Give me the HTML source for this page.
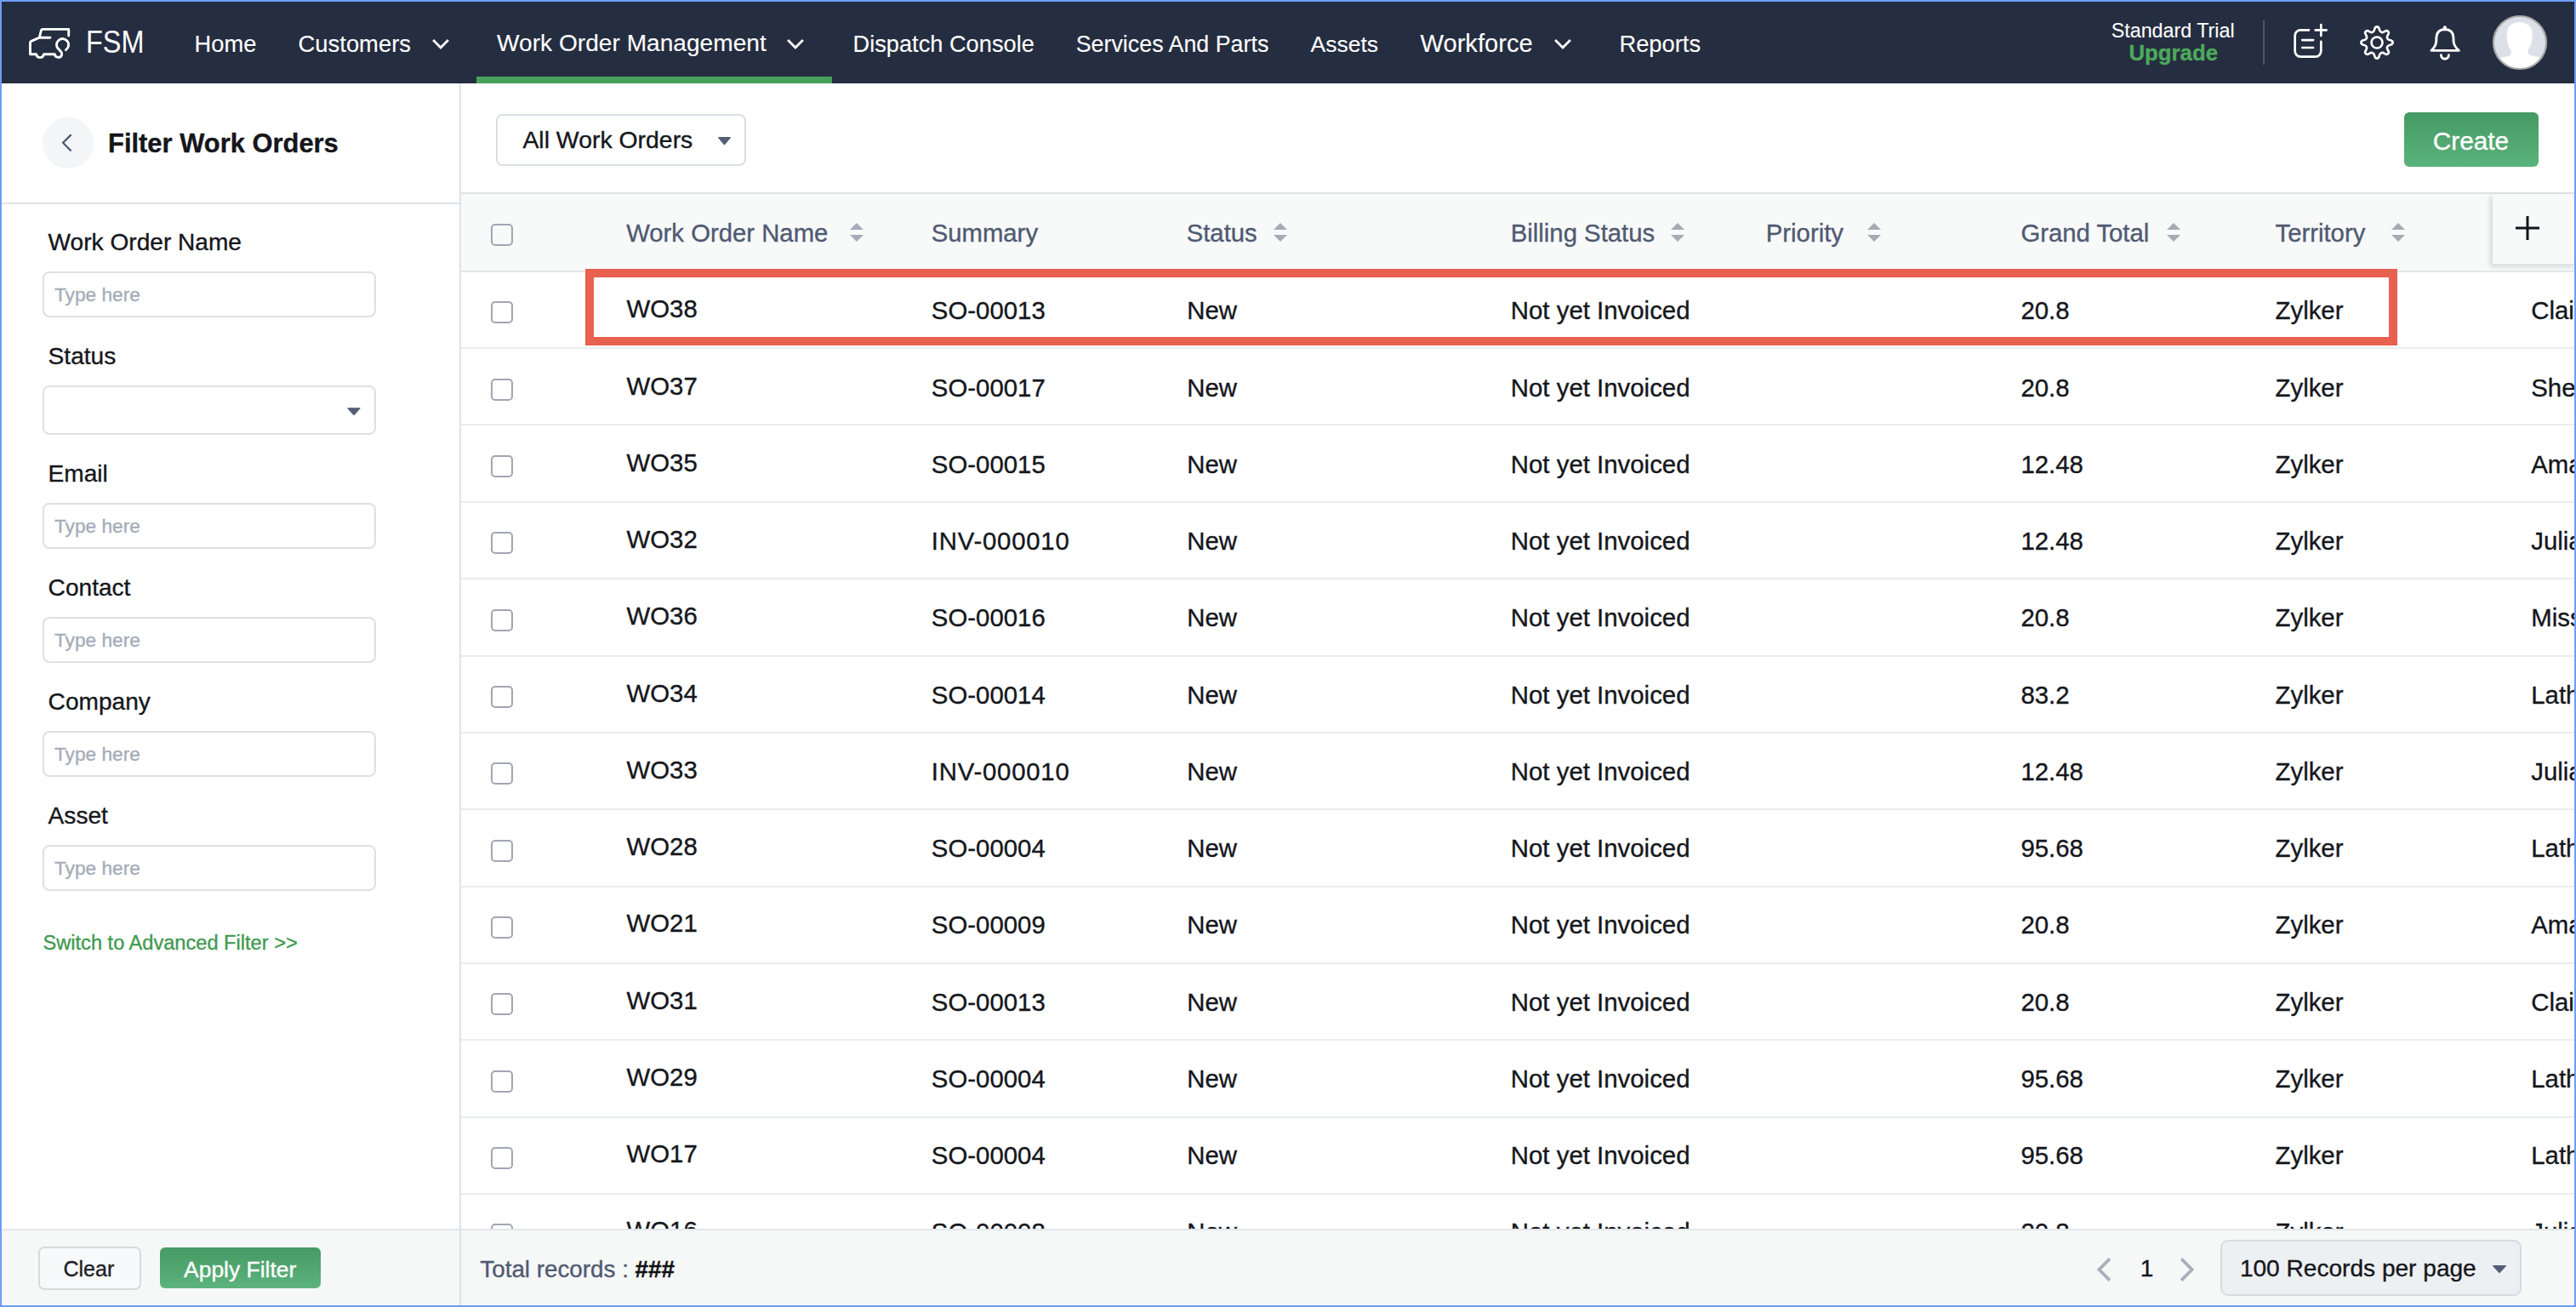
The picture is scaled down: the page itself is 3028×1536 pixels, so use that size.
<!DOCTYPE html><html><head><meta charset="utf-8"><style>
*{margin:0;padding:0;box-sizing:border-box}
html,body{width:3028px;height:1536px;overflow:hidden;background:#fff;font-family:"Liberation Sans",sans-serif}
.t{position:absolute;line-height:1;white-space:nowrap;-webkit-text-stroke:0.35px currentColor}
.a{position:absolute}
</style></head><body>
<div class="a" style="left:0;top:0;width:3028px;height:1536px;border:2px solid #6f9cf6;z-index:50;pointer-events:none"></div>
<div class="a" style="left:0;top:0;width:3028px;height:98px;background:#252d40"></div>
<div class="a" style="left:560px;top:90px;width:418px;height:8px;background:#46a05a"></div>
<svg class="a" style="left:30px;top:28px" width="60" height="48" viewBox="0 0 60 48" fill="none" stroke="#fff" stroke-width="2.9" stroke-linecap="round" stroke-linejoin="round">
<path d="M50.7,14 V6.4 H20 Q18.9,6.4 18.5,7.5 L16.3,16.2 H29 M16.3,16.2 L6.8,20.4 Q5.5,21 5.5,22.4 V35.8 H12.6 A4.5,4.5 0 0 0 21.5,35.8 H34.3 A4.3,4.3 0 0 0 42.6,36.5 Q43.2,34.5 41.8,33 L37.2,27.8 A7.1,7.1 0 1 1 47.4,30.6"/>
</svg>
<div class="t" style="left:100.5px;top:30.7px;font-size:37.0px;color:#fff;-webkit-text-stroke:0;transform:scaleX(0.8774);transform-origin:0 0;">FSM</div>
<div class="t" style="left:228.6px;top:38.1px;font-size:27.34px;color:#fff;-webkit-text-stroke:0.1px #fff;">Home</div>
<div class="t" style="left:350.6px;top:38.0px;font-size:27.38px;color:#fff;-webkit-text-stroke:0.1px #fff;">Customers</div>
<div class="t" style="left:584.0px;top:37.4px;font-size:28.14px;color:#fff;-webkit-text-stroke:0.1px #fff;">Work Order Management</div>
<div class="t" style="left:1002.5px;top:38.1px;font-size:27.23px;color:#fff;-webkit-text-stroke:0.1px #fff;">Dispatch Console</div>
<div class="t" style="left:1264.7px;top:38.5px;font-size:26.83px;color:#fff;-webkit-text-stroke:0.1px #fff;">Services And Parts</div>
<div class="t" style="left:1540.5px;top:38.8px;font-size:26.5px;color:#fff;-webkit-text-stroke:0.1px #fff;">Assets</div>
<div class="t" style="left:1669.5px;top:36.5px;font-size:29.14px;color:#fff;-webkit-text-stroke:0.1px #fff;">Workforce</div>
<div class="t" style="left:1903.5px;top:38.1px;font-size:27.29px;color:#fff;-webkit-text-stroke:0.1px #fff;">Reports</div>
<svg class="a" style="left:505.5px;top:40px" width="24" height="22" viewBox="0 0 24 22" fill="none" stroke="#fff" stroke-width="2.8" stroke-linecap="butt" stroke-linejoin="miter"><path d="M3.1,7.1 L12,16 L20.9,7.1"/></svg>
<svg class="a" style="left:923.2px;top:40px" width="24" height="22" viewBox="0 0 24 22" fill="none" stroke="#fff" stroke-width="2.8" stroke-linecap="butt" stroke-linejoin="miter"><path d="M3.1,7.1 L12,16 L20.9,7.1"/></svg>
<svg class="a" style="left:1825.1px;top:40px" width="24" height="22" viewBox="0 0 24 22" fill="none" stroke="#fff" stroke-width="2.8" stroke-linecap="butt" stroke-linejoin="miter"><path d="M3.1,7.1 L12,16 L20.9,7.1"/></svg>
<div class="t" style="left:2481.7px;top:24.9px;font-size:23.29px;color:#fff;-webkit-text-stroke:0.1px #fff;">Standard Trial</div>
<div class="t" style="left:2502.4px;top:50.2px;font-size:25.8px;color:#4caa5c;font-weight:700;">Upgrade</div>
<div class="a" style="left:2660px;top:24px;width:2px;height:52px;background:#4d5566"></div>
<svg class="a" style="left:2690px;top:22px" width="50" height="50" viewBox="0 0 50 50" fill="none" stroke="#fff" stroke-width="2.7" stroke-linecap="round">
<path d="M24,13.4 H14.2 A6.5,6.5 0 0 0 7.65,19.9 V38.1 A6.5,6.5 0 0 0 14.2,44.6 H31.8 A6.5,6.5 0 0 0 38.3,38.1 V26.9 M16.2,25.1 H29.1 M16.2,34 H29.1 M38.3,7.1 V19.9 M31.7,13.4 H44.6"/>
</svg>
<svg class="a" style="left:2768px;top:24px" width="50" height="50" viewBox="0 0 50 50" fill="none" stroke="#fff" stroke-width="2.7" stroke-linejoin="round">
<path d="M20.96,13.83 Q22.67,13.12 23.28,10.27 Q23.88,7.42 26.00,7.42 Q28.12,7.42 28.72,10.27 Q29.33,13.12 31.04,13.83 Q32.75,14.54 35.20,12.95 Q37.64,11.37 39.14,12.86 Q40.63,14.36 39.05,16.80 Q37.46,19.25 38.17,20.96 Q38.88,22.67 41.73,23.28 Q44.58,23.88 44.58,26.00 Q44.58,28.12 41.73,28.72 Q38.88,29.33 38.17,31.04 Q37.46,32.75 39.05,35.20 Q40.63,37.64 39.14,39.14 Q37.64,40.63 35.20,39.05 Q32.75,37.46 31.04,38.17 Q29.33,38.88 28.72,41.73 Q28.12,44.58 26.00,44.58 Q23.88,44.58 23.28,41.73 Q22.67,38.88 20.96,38.17 Q19.25,37.46 16.80,39.05 Q14.36,40.63 12.86,39.14 Q11.37,37.64 12.95,35.20 Q14.54,32.75 13.83,31.04 Q13.12,29.33 10.27,28.72 Q7.42,28.12 7.42,26.00 Q7.42,23.88 10.27,23.28 Q13.12,22.67 13.83,20.96 Q14.54,19.25 12.95,16.80 Q11.37,14.36 12.86,12.86 Q14.36,11.37 16.80,12.95 Q19.25,14.54 20.96,13.83Z"/><circle cx="26" cy="26" r="6.5"/>
</svg>
<svg class="a" style="left:2850px;top:24px" width="50" height="50" viewBox="0 0 50 50" fill="none" stroke="#fff" stroke-width="2.9" stroke-linecap="round" stroke-linejoin="round">
<path d="M8,35.4 Q13.3,30 13.7,25 L13.9,19.5 Q14.6,10.7 23.9,10.5 Q33.2,10.7 33.9,19.5 L34.1,25 Q34.5,30 40.3,35.4 Z"/>
<path d="M19.4,40.8 A4.5,4.5 0 0 0 28.4,40.8"/>
<circle cx="23.9" cy="8.3" r="2.1" fill="#fff" stroke="none"/>
</svg>
<svg class="a" style="left:2928px;top:16px" width="68" height="68" viewBox="0 0 68 68">
<defs><clipPath id="av"><circle cx="34" cy="34" r="31"/></clipPath></defs>
<circle cx="34" cy="34" r="31" fill="#dce0e9"/>
<g clip-path="url(#av)" fill="#fff">
<path d="M18.7,25 Q18.5,11 33.5,10.1 Q48.8,11 48.6,25 Q48.3,33 46.8,37 Q45.5,40 44,42 L43.4,44.5 L44.5,48 Q47,49.5 53,50.5 Q58,51.5 60,54 L66,70 L2,70 L8,54 Q10,52 16,51 Q21,50 23.5,48.5 L23.8,44.5 L22,41 Q20.5,38 19.5,34 Q18.8,30 18.7,25 Z"/>
</g>
<circle cx="34" cy="34" r="31" fill="none" stroke="#a9a9a9" stroke-width="2.2"/>
</svg>
<div class="a" style="left:540px;top:98px;width:2px;height:1438px;background:#dde3e8"></div>
<div class="a" style="left:2px;top:238px;width:538px;height:2px;background:#dde3e8"></div>
<div class="a" style="left:50px;top:138px;width:60px;height:60px;border-radius:50%;background:#f3f5f7"></div>
<svg class="a" style="left:66px;top:152px" width="28" height="32" viewBox="0 0 28 32" fill="none" stroke="#4d5873" stroke-width="2.3" stroke-linecap="round" stroke-linejoin="round"><path d="M17,6.9 L8,15.8 L17,24.8"/></svg>
<div class="t" style="left:127.0px;top:153.8px;font-size:30.91px;color:#14161b;font-weight:700;">Filter Work Orders</div>
<div class="t" style="left:56.6px;top:270.8px;font-size:28.1px;color:#15171c;">Work Order Name</div>
<div class="a" style="left:50px;top:319px;width:392px;height:54px;border:2px solid #dce1e5;border-radius:8px;background:#fff"></div>
<div class="t" style="left:64.0px;top:335.4px;font-size:22.7px;color:#a5acb8;">Type here</div>
<div class="t" style="left:56.6px;top:405.2px;font-size:28.1px;color:#15171c;">Status</div>
<div class="a" style="left:50px;top:453px;width:392px;height:58px;border:2px solid #dce1e5;border-radius:8px;background:#fff"></div>
<svg class="a" style="left:407px;top:478px" width="18" height="10" viewBox="0 0 18 10"><path d="M2,1.8 H16 L9,9.6Z" fill="#535e76" stroke="#535e76" stroke-width="1.2" stroke-linejoin="round"/></svg>
<div class="t" style="left:56.6px;top:542.6px;font-size:28.1px;color:#15171c;">Email</div>
<div class="a" style="left:50px;top:591px;width:392px;height:54px;border:2px solid #dce1e5;border-radius:8px;background:#fff"></div>
<div class="t" style="left:64.0px;top:607.4px;font-size:22.7px;color:#a5acb8;">Type here</div>
<div class="t" style="left:56.6px;top:677.2px;font-size:28.1px;color:#15171c;">Contact</div>
<div class="a" style="left:50px;top:725px;width:392px;height:54px;border:2px solid #dce1e5;border-radius:8px;background:#fff"></div>
<div class="t" style="left:64.0px;top:741.4px;font-size:22.7px;color:#a5acb8;">Type here</div>
<div class="t" style="left:56.6px;top:811.4px;font-size:28.1px;color:#15171c;">Company</div>
<div class="a" style="left:50px;top:859px;width:392px;height:54px;border:2px solid #dce1e5;border-radius:8px;background:#fff"></div>
<div class="t" style="left:64.0px;top:875.4px;font-size:22.7px;color:#a5acb8;">Type here</div>
<div class="t" style="left:56.6px;top:945.2px;font-size:28.1px;color:#15171c;">Asset</div>
<div class="a" style="left:50px;top:993px;width:392px;height:54px;border:2px solid #dce1e5;border-radius:8px;background:#fff"></div>
<div class="t" style="left:64.0px;top:1009.4px;font-size:22.7px;color:#a5acb8;">Type here</div>
<div class="t" style="left:50.5px;top:1097.3px;font-size:23.61px;color:#3f9a50;">Switch to Advanced Filter &gt;&gt;</div>
<div class="a" style="left:583px;top:134px;width:294px;height:61px;border:2px solid #d9dfe4;border-radius:8px;background:#fff"></div>
<div class="t" style="left:614.4px;top:150.3px;font-size:28.41px;color:#15171c;">All Work Orders</div>
<svg class="a" style="left:843px;top:160px" width="18" height="12" viewBox="0 0 18 12"><path d="M1.6,1.6 H15.4 L8.5,9.8Z" fill="#535e76" stroke="#535e76" stroke-width="1.2" stroke-linejoin="round"/></svg>
<div class="a" style="left:2826px;top:132px;width:158px;height:64px;border-radius:6px;background:linear-gradient(#469a63,#5ab37c)"></div>
<div class="t" style="left:2859.8px;top:150.7px;font-size:29.73px;color:#fff;">Create</div>
<div class="a" style="left:542px;top:226px;width:2486px;height:94px;background:#f8f9f9;border-top:2px solid #dde3e8;border-bottom:2px solid #e3e8ec"></div>
<div class="a" style="left:577px;top:263px;width:26px;height:26px;border:2px solid #a1a6b4;border-radius:5px"></div>
<div class="t" style="left:736.2px;top:258.7px;font-size:29.3px;color:#4f5a72;">Work Order Name</div>
<svg class="a" style="left:999.0px;top:262px" width="16" height="22" viewBox="0 0 16 22" fill="#a6abb8"><path d="M0,8 L8,0 L16,8Z M0,14 L8,22 L16,14Z"/></svg>
<div class="t" style="left:1094.7px;top:258.7px;font-size:29.3px;color:#4f5a72;">Summary</div>
<div class="t" style="left:1394.7px;top:258.7px;font-size:29.3px;color:#4f5a72;">Status</div>
<svg class="a" style="left:1497.0px;top:262px" width="16" height="22" viewBox="0 0 16 22" fill="#a6abb8"><path d="M0,8 L8,0 L16,8Z M0,14 L8,22 L16,14Z"/></svg>
<div class="t" style="left:1775.8px;top:258.7px;font-size:29.3px;color:#4f5a72;">Billing Status</div>
<svg class="a" style="left:1964.0px;top:262px" width="16" height="22" viewBox="0 0 16 22" fill="#a6abb8"><path d="M0,8 L8,0 L16,8Z M0,14 L8,22 L16,14Z"/></svg>
<div class="t" style="left:2075.8px;top:258.7px;font-size:29.3px;color:#4f5a72;">Priority</div>
<svg class="a" style="left:2195.4px;top:262px" width="16" height="22" viewBox="0 0 16 22" fill="#a6abb8"><path d="M0,8 L8,0 L16,8Z M0,14 L8,22 L16,14Z"/></svg>
<div class="t" style="left:2375.4px;top:258.7px;font-size:29.3px;color:#4f5a72;">Grand Total</div>
<svg class="a" style="left:2547.3px;top:262px" width="16" height="22" viewBox="0 0 16 22" fill="#a6abb8"><path d="M0,8 L8,0 L16,8Z M0,14 L8,22 L16,14Z"/></svg>
<div class="t" style="left:2674.5px;top:258.7px;font-size:29.3px;color:#4f5a72;">Territory</div>
<svg class="a" style="left:2811.0px;top:262px" width="16" height="22" viewBox="0 0 16 22" fill="#a6abb8"><path d="M0,8 L8,0 L16,8Z M0,14 L8,22 L16,14Z"/></svg>
<div class="a" style="left:2930px;top:228px;width:98px;height:83px;background:#f8f9f9;border-bottom:1.5px solid #dfe4e8;box-shadow:-3px 3px 6px rgba(0,0,0,0.13)"></div>
<svg class="a" style="left:2956px;top:253.3px" width="30" height="30" viewBox="0 0 30 30" stroke="#121419" stroke-width="3"><path d="M15,1 V29 M1,15 H29"/></svg>
<div class="a" style="left:542px;top:408.1px;width:2486px;height:2px;background:#e9edf0"></div>
<div class="a" style="left:577px;top:354px;width:26px;height:26px;border:2px solid #a1a6b4;border-radius:5px"></div>
<div class="t" style="left:736.5px;top:348.2px;font-size:29.4px;color:#15171c;">WO38</div>
<div class="t" style="left:1094.8px;top:350.2px;font-size:29.4px;color:#15171c;">SO-00013</div>
<div class="t" style="left:1395.3px;top:350.2px;font-size:29.4px;color:#15171c;">New</div>
<div class="t" style="left:1775.8px;top:350.2px;font-size:29.4px;color:#15171c;">Not yet Invoiced</div>
<div class="t" style="left:2375.4px;top:350.2px;font-size:29.4px;color:#15171c;">20.8</div>
<div class="t" style="left:2674.5px;top:350.2px;font-size:29.4px;color:#15171c;">Zylker</div>
<div class="t" style="left:2975.2px;top:350.2px;font-size:29.4px;color:#15171c;">Claire</div>
<div class="a" style="left:542px;top:498.4px;width:2486px;height:2px;background:#e9edf0"></div>
<div class="a" style="left:577px;top:445px;width:26px;height:26px;border:2px solid #a1a6b4;border-radius:5px"></div>
<div class="t" style="left:736.5px;top:438.5px;font-size:29.4px;color:#15171c;">WO37</div>
<div class="t" style="left:1094.8px;top:440.5px;font-size:29.4px;color:#15171c;">SO-00017</div>
<div class="t" style="left:1395.3px;top:440.5px;font-size:29.4px;color:#15171c;">New</div>
<div class="t" style="left:1775.8px;top:440.5px;font-size:29.4px;color:#15171c;">Not yet Invoiced</div>
<div class="t" style="left:2375.4px;top:440.5px;font-size:29.4px;color:#15171c;">20.8</div>
<div class="t" style="left:2674.5px;top:440.5px;font-size:29.4px;color:#15171c;">Zylker</div>
<div class="t" style="left:2975.2px;top:440.5px;font-size:29.4px;color:#15171c;">Shelby</div>
<div class="a" style="left:542px;top:588.8px;width:2486px;height:2px;background:#e9edf0"></div>
<div class="a" style="left:577px;top:535px;width:26px;height:26px;border:2px solid #a1a6b4;border-radius:5px"></div>
<div class="t" style="left:736.5px;top:528.7px;font-size:29.4px;color:#15171c;">WO35</div>
<div class="t" style="left:1094.8px;top:530.7px;font-size:29.4px;color:#15171c;">SO-00015</div>
<div class="t" style="left:1395.3px;top:530.7px;font-size:29.4px;color:#15171c;">New</div>
<div class="t" style="left:1775.8px;top:530.7px;font-size:29.4px;color:#15171c;">Not yet Invoiced</div>
<div class="t" style="left:2375.4px;top:530.7px;font-size:29.4px;color:#15171c;">12.48</div>
<div class="t" style="left:2674.5px;top:530.7px;font-size:29.4px;color:#15171c;">Zylker</div>
<div class="t" style="left:2975.2px;top:530.7px;font-size:29.4px;color:#15171c;">Amanda</div>
<div class="a" style="left:542px;top:679.1px;width:2486px;height:2px;background:#e9edf0"></div>
<div class="a" style="left:577px;top:625px;width:26px;height:26px;border:2px solid #a1a6b4;border-radius:5px"></div>
<div class="t" style="left:736.5px;top:619.0px;font-size:29.4px;color:#15171c;">WO32</div>
<div class="t" style="left:1094.8px;top:621.0px;font-size:29.4px;color:#15171c;letter-spacing:0.75px;">INV-000010</div>
<div class="t" style="left:1395.3px;top:621.0px;font-size:29.4px;color:#15171c;">New</div>
<div class="t" style="left:1775.8px;top:621.0px;font-size:29.4px;color:#15171c;">Not yet Invoiced</div>
<div class="t" style="left:2375.4px;top:621.0px;font-size:29.4px;color:#15171c;">12.48</div>
<div class="t" style="left:2674.5px;top:621.0px;font-size:29.4px;color:#15171c;">Zylker</div>
<div class="t" style="left:2975.2px;top:621.0px;font-size:29.4px;color:#15171c;">Julia</div>
<div class="a" style="left:542px;top:769.5px;width:2486px;height:2px;background:#e9edf0"></div>
<div class="a" style="left:577px;top:716px;width:26px;height:26px;border:2px solid #a1a6b4;border-radius:5px"></div>
<div class="t" style="left:736.5px;top:709.3px;font-size:29.4px;color:#15171c;">WO36</div>
<div class="t" style="left:1094.8px;top:711.3px;font-size:29.4px;color:#15171c;">SO-00016</div>
<div class="t" style="left:1395.3px;top:711.3px;font-size:29.4px;color:#15171c;">New</div>
<div class="t" style="left:1775.8px;top:711.3px;font-size:29.4px;color:#15171c;">Not yet Invoiced</div>
<div class="t" style="left:2375.4px;top:711.3px;font-size:29.4px;color:#15171c;">20.8</div>
<div class="t" style="left:2674.5px;top:711.3px;font-size:29.4px;color:#15171c;">Zylker</div>
<div class="t" style="left:2975.2px;top:711.3px;font-size:29.4px;color:#15171c;">Missy</div>
<div class="a" style="left:542px;top:859.8px;width:2486px;height:2px;background:#e9edf0"></div>
<div class="a" style="left:577px;top:806px;width:26px;height:26px;border:2px solid #a1a6b4;border-radius:5px"></div>
<div class="t" style="left:736.5px;top:799.6px;font-size:29.4px;color:#15171c;">WO34</div>
<div class="t" style="left:1094.8px;top:801.6px;font-size:29.4px;color:#15171c;">SO-00014</div>
<div class="t" style="left:1395.3px;top:801.6px;font-size:29.4px;color:#15171c;">New</div>
<div class="t" style="left:1775.8px;top:801.6px;font-size:29.4px;color:#15171c;">Not yet Invoiced</div>
<div class="t" style="left:2375.4px;top:801.6px;font-size:29.4px;color:#15171c;">83.2</div>
<div class="t" style="left:2674.5px;top:801.6px;font-size:29.4px;color:#15171c;">Zylker</div>
<div class="t" style="left:2975.2px;top:801.6px;font-size:29.4px;color:#15171c;">Latha</div>
<div class="a" style="left:542px;top:950.1px;width:2486px;height:2px;background:#e9edf0"></div>
<div class="a" style="left:577px;top:896px;width:26px;height:26px;border:2px solid #a1a6b4;border-radius:5px"></div>
<div class="t" style="left:736.5px;top:889.8px;font-size:29.4px;color:#15171c;">WO33</div>
<div class="t" style="left:1094.8px;top:891.8px;font-size:29.4px;color:#15171c;letter-spacing:0.75px;">INV-000010</div>
<div class="t" style="left:1395.3px;top:891.8px;font-size:29.4px;color:#15171c;">New</div>
<div class="t" style="left:1775.8px;top:891.8px;font-size:29.4px;color:#15171c;">Not yet Invoiced</div>
<div class="t" style="left:2375.4px;top:891.8px;font-size:29.4px;color:#15171c;">12.48</div>
<div class="t" style="left:2674.5px;top:891.8px;font-size:29.4px;color:#15171c;">Zylker</div>
<div class="t" style="left:2975.2px;top:891.8px;font-size:29.4px;color:#15171c;">Julia</div>
<div class="a" style="left:542px;top:1040.5px;width:2486px;height:2px;background:#e9edf0"></div>
<div class="a" style="left:577px;top:987px;width:26px;height:26px;border:2px solid #a1a6b4;border-radius:5px"></div>
<div class="t" style="left:736.5px;top:980.1px;font-size:29.4px;color:#15171c;">WO28</div>
<div class="t" style="left:1094.8px;top:982.1px;font-size:29.4px;color:#15171c;">SO-00004</div>
<div class="t" style="left:1395.3px;top:982.1px;font-size:29.4px;color:#15171c;">New</div>
<div class="t" style="left:1775.8px;top:982.1px;font-size:29.4px;color:#15171c;">Not yet Invoiced</div>
<div class="t" style="left:2375.4px;top:982.1px;font-size:29.4px;color:#15171c;">95.68</div>
<div class="t" style="left:2674.5px;top:982.1px;font-size:29.4px;color:#15171c;">Zylker</div>
<div class="t" style="left:2975.2px;top:982.1px;font-size:29.4px;color:#15171c;">Latha</div>
<div class="a" style="left:542px;top:1130.8px;width:2486px;height:2px;background:#e9edf0"></div>
<div class="a" style="left:577px;top:1077px;width:26px;height:26px;border:2px solid #a1a6b4;border-radius:5px"></div>
<div class="t" style="left:736.5px;top:1070.4px;font-size:29.4px;color:#15171c;">WO21</div>
<div class="t" style="left:1094.8px;top:1072.4px;font-size:29.4px;color:#15171c;">SO-00009</div>
<div class="t" style="left:1395.3px;top:1072.4px;font-size:29.4px;color:#15171c;">New</div>
<div class="t" style="left:1775.8px;top:1072.4px;font-size:29.4px;color:#15171c;">Not yet Invoiced</div>
<div class="t" style="left:2375.4px;top:1072.4px;font-size:29.4px;color:#15171c;">20.8</div>
<div class="t" style="left:2674.5px;top:1072.4px;font-size:29.4px;color:#15171c;">Zylker</div>
<div class="t" style="left:2975.2px;top:1072.4px;font-size:29.4px;color:#15171c;">Amanda</div>
<div class="a" style="left:542px;top:1221.2px;width:2486px;height:2px;background:#e9edf0"></div>
<div class="a" style="left:577px;top:1167px;width:26px;height:26px;border:2px solid #a1a6b4;border-radius:5px"></div>
<div class="t" style="left:736.5px;top:1160.6px;font-size:29.4px;color:#15171c;">WO31</div>
<div class="t" style="left:1094.8px;top:1162.6px;font-size:29.4px;color:#15171c;">SO-00013</div>
<div class="t" style="left:1395.3px;top:1162.6px;font-size:29.4px;color:#15171c;">New</div>
<div class="t" style="left:1775.8px;top:1162.6px;font-size:29.4px;color:#15171c;">Not yet Invoiced</div>
<div class="t" style="left:2375.4px;top:1162.6px;font-size:29.4px;color:#15171c;">20.8</div>
<div class="t" style="left:2674.5px;top:1162.6px;font-size:29.4px;color:#15171c;">Zylker</div>
<div class="t" style="left:2975.2px;top:1162.6px;font-size:29.4px;color:#15171c;">Claire</div>
<div class="a" style="left:542px;top:1311.5px;width:2486px;height:2px;background:#e9edf0"></div>
<div class="a" style="left:577px;top:1258px;width:26px;height:26px;border:2px solid #a1a6b4;border-radius:5px"></div>
<div class="t" style="left:736.5px;top:1250.9px;font-size:29.4px;color:#15171c;">WO29</div>
<div class="t" style="left:1094.8px;top:1252.9px;font-size:29.4px;color:#15171c;">SO-00004</div>
<div class="t" style="left:1395.3px;top:1252.9px;font-size:29.4px;color:#15171c;">New</div>
<div class="t" style="left:1775.8px;top:1252.9px;font-size:29.4px;color:#15171c;">Not yet Invoiced</div>
<div class="t" style="left:2375.4px;top:1252.9px;font-size:29.4px;color:#15171c;">95.68</div>
<div class="t" style="left:2674.5px;top:1252.9px;font-size:29.4px;color:#15171c;">Zylker</div>
<div class="t" style="left:2975.2px;top:1252.9px;font-size:29.4px;color:#15171c;">Latha</div>
<div class="a" style="left:542px;top:1401.9px;width:2486px;height:2px;background:#e9edf0"></div>
<div class="a" style="left:577px;top:1348px;width:26px;height:26px;border:2px solid #a1a6b4;border-radius:5px"></div>
<div class="t" style="left:736.5px;top:1341.2px;font-size:29.4px;color:#15171c;">WO17</div>
<div class="t" style="left:1094.8px;top:1343.2px;font-size:29.4px;color:#15171c;">SO-00004</div>
<div class="t" style="left:1395.3px;top:1343.2px;font-size:29.4px;color:#15171c;">New</div>
<div class="t" style="left:1775.8px;top:1343.2px;font-size:29.4px;color:#15171c;">Not yet Invoiced</div>
<div class="t" style="left:2375.4px;top:1343.2px;font-size:29.4px;color:#15171c;">95.68</div>
<div class="t" style="left:2674.5px;top:1343.2px;font-size:29.4px;color:#15171c;">Zylker</div>
<div class="t" style="left:2975.2px;top:1343.2px;font-size:29.4px;color:#15171c;">Latha</div>
<div class="a" style="left:542px;top:1492.2px;width:2486px;height:2px;background:#e9edf0"></div>
<div class="a" style="left:577px;top:1438px;width:26px;height:26px;border:2px solid #a1a6b4;border-radius:5px"></div>
<div class="t" style="left:736.5px;top:1431.4px;font-size:29.4px;color:#15171c;">WO16</div>
<div class="t" style="left:1094.8px;top:1433.4px;font-size:29.4px;color:#15171c;">SO-00008</div>
<div class="t" style="left:1395.3px;top:1433.4px;font-size:29.4px;color:#15171c;">New</div>
<div class="t" style="left:1775.8px;top:1433.4px;font-size:29.4px;color:#15171c;">Not yet Invoiced</div>
<div class="t" style="left:2375.4px;top:1433.4px;font-size:29.4px;color:#15171c;">20.8</div>
<div class="t" style="left:2674.5px;top:1433.4px;font-size:29.4px;color:#15171c;">Zylker</div>
<div class="t" style="left:2975.2px;top:1433.4px;font-size:29.4px;color:#15171c;">Julia</div>
<div class="a" style="left:688px;top:316px;width:2130px;height:90px;border:10px solid #e8604f;z-index:5"></div>
<div class="a" style="left:2px;top:1444px;width:3026px;height:92px;background:#f6f7f7;border-top:2px solid #e1e6ea;z-index:10"></div>
<div class="a" style="left:540px;top:1444px;width:2px;height:92px;background:#dde3e8;z-index:11"></div>
<div class="a" style="left:45px;top:1465px;width:121px;height:51px;border:2px solid #d5dbe0;border-radius:7px;background:#f8f9fa;z-index:11"></div>
<div class="t" style="left:74.4px;top:1479.2px;font-size:25.1px;color:#1d2026;z-index:12">Clear</div>
<div class="a" style="left:188px;top:1466px;width:189px;height:48px;border-radius:6px;background:linear-gradient(#469a63,#5cb37d);z-index:11"></div>
<div class="t" style="left:216.0px;top:1478.6px;font-size:26.48px;color:#fff;z-index:12">Apply Filter</div>
<div class="t" style="left:564.3px;top:1478.1px;font-size:27.8px;color:#4f5a72;z-index:12">Total records : <b style="color:#111">###</b></div>
<svg class="a" style="left:2462px;top:1476px;z-index:12" width="22" height="32" viewBox="0 0 22 32" fill="none" stroke="#a9afba" stroke-width="3.7" stroke-linecap="butt"><path d="M17.9,3.4 L5.4,16 L17.9,28.6"/></svg>
<div class="t" style="left:2515.8px;top:1476.9px;font-size:28.1px;color:#15171c;z-index:12">1</div>
<svg class="a" style="left:2560px;top:1476px;z-index:12" width="22" height="32" viewBox="0 0 22 32" fill="none" stroke="#a9afba" stroke-width="3.7" stroke-linecap="butt"><path d="M4.1,3.4 L16.6,16 L4.1,28.6"/></svg>
<div class="a" style="left:2610px;top:1457px;width:354px;height:66px;border:2px solid #d5dbe1;border-radius:9px;background:#edf0f3;z-index:11"></div>
<div class="t" style="left:2632.9px;top:1476.9px;font-size:28.08px;color:#15171c;z-index:12">100 Records per page</div>
<svg class="a" style="left:2929px;top:1486px;z-index:12" width="18" height="11" viewBox="0 0 18 11"><path d="M1.6,1.6 H16.4 L9,9.6Z" fill="#535e76" stroke="#535e76" stroke-width="1.2" stroke-linejoin="round"/></svg>
</body></html>
